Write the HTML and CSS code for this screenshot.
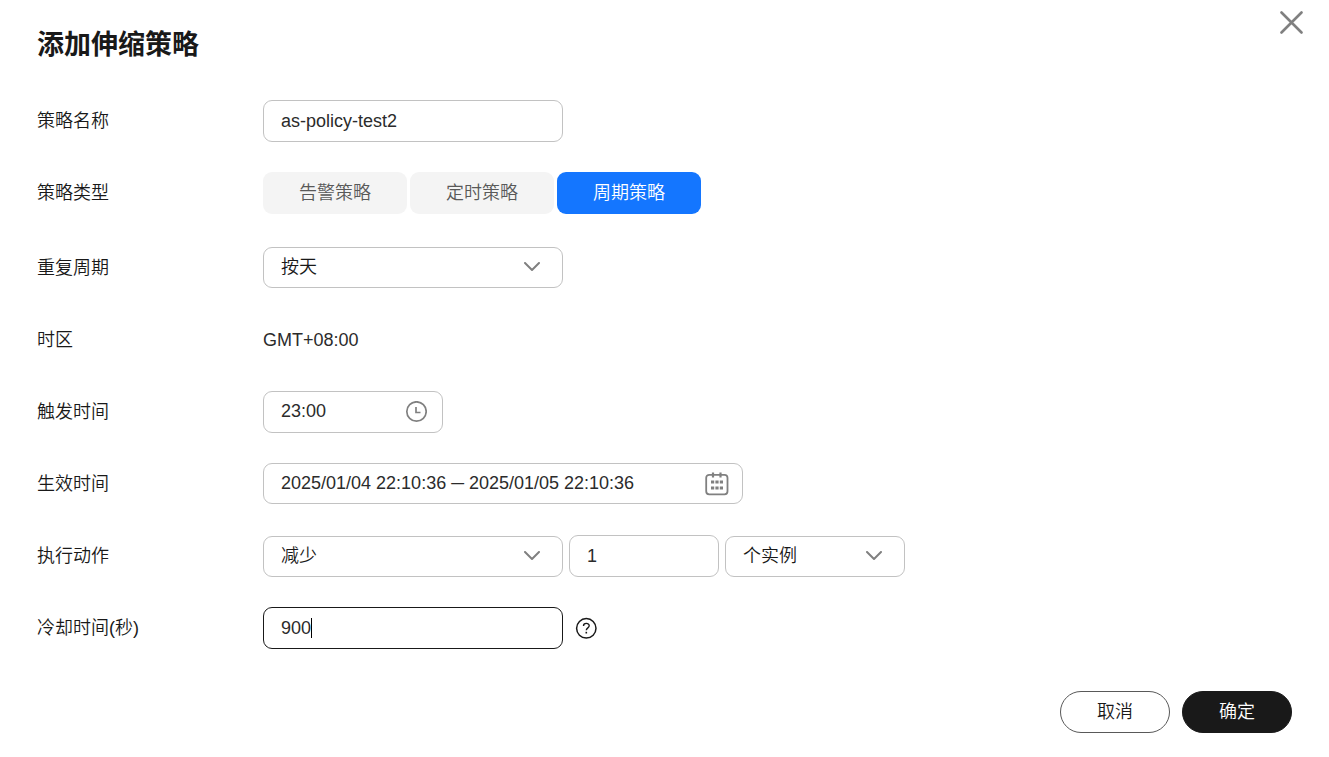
FILE: index.html
```html
<!DOCTYPE html>
<html lang="zh-CN">
<head>
<meta charset="utf-8">
<meta name="viewport" content="width=device-width, initial-scale=1">
<title>添加伸缩策略</title>
<link rel="stylesheet" href="styles.css">
</head>
<body>
<main class="dialog" role="dialog" aria-labelledby="dialog-title">
  <header class="dialog-header">
    <h1 class="dialog-title" id="dialog-title">添加伸缩策略</h1>
    <button class="close" type="button" aria-label="关闭">
      <svg width="24" height="24" viewBox="0 0 24 24" fill="none" stroke="currentColor" stroke-width="2.6" stroke-linecap="round"><path d="M2.500 2.500 22.500 22.500M22.500 2.500 2.500 22.500"/></svg>
    </button>
  </header>

  <form class="form">
    <div class="row">
      <label class="label" for="name">策略名称</label>
      <div class="controls"><input class="field input w-large" id="name" type="text" value="as-policy-test2"></div>
    </div>

    <div class="row row-tabs">
      <span class="label" id="type-label">策略类型</span>
      <div class="controls tabs" role="group" aria-labelledby="type-label">
        <button class="tab" type="button">告警策略</button>
        <button class="tab" type="button">定时策略</button>
        <button class="tab tab-active" type="button" aria-pressed="true">周期策略</button>
      </div>
    </div>

    <div class="row">
      <label class="label" for="period">重复周期</label>
      <div class="controls">
        <div class="picker w-large">
          <select class="field select" id="period"><option>按天</option></select>
          <svg class="chevron" width="16" height="10" viewBox="0 0 16 10"><path d="M1 1 8 8 15 1"/></svg>
        </div>
      </div>
    </div>

    <div class="row">
      <span class="label">时区</span>
      <div class="controls"><span class="value">GMT+08:00</span></div>
    </div>

    <div class="row">
      <label class="label" for="trigger">触发时间</label>
      <div class="controls">
        <div class="field time w-small">
          <input class="bare" id="trigger" type="text" value="23:00">
          <svg width="22" height="22" viewBox="0 0 22 22" fill="none" stroke="#808080" stroke-width="1.7"><circle cx="11.500" cy="10.500" r="9.700"/><path d="M11 6v5.500h4.500"/></svg>
        </div>
      </div>
    </div>

    <div class="row">
      <label class="label" for="effective">生效时间</label>
      <div class="controls">
        <div class="field range">
          <input class="bare" id="effective" type="text" value="2025/01/04 22:10:36 ─ 2025/01/05 22:10:36">
          <svg width="24" height="24" viewBox="0 0 24 24" fill="none" stroke="#808080" stroke-width="1.8"><rect x="1.200" y="2.800" width="21.300" height="19.500" rx="3"/><path d="M8 .5v5M15.500 .5v5" stroke-width="2.200"/><path d="M6 10h3.200M10.400 10h3.200M14.800 10h3.200M6 16h3.200M10.400 16h3.200M14.800 16h3.200" stroke-width="3.200"/></svg>
        </div>
      </div>
    </div>

    <div class="row row-action">
      <label class="label" for="action">执行动作</label>
      <div class="controls">
        <div class="picker w-large">
          <select class="field select" id="action"><option>减少</option></select>
          <svg class="chevron" width="16" height="10" viewBox="0 0 16 10"><path d="M1 1 8 8 15 1"/></svg>
        </div>
        <input class="field input w-count" type="text" value="1" aria-label="数量">
        <div class="picker w-small">
          <select class="field select" aria-label="单位"><option>个实例</option></select>
          <svg class="chevron" width="16" height="10" viewBox="0 0 16 10"><path d="M1 1 8 8 15 1"/></svg>
        </div>
      </div>
    </div>

    <div class="row row-cooldown">
      <label class="label" for="cooldown">冷却时间(秒)</label>
      <div class="controls">
        <div class="field editing w-large">
          <input class="bare" id="cooldown" type="text" value="900"><span class="caret"></span>
        </div>
        <button class="help" type="button" aria-label="帮助">
          <svg width="22" height="22" viewBox="0 0 22 22" fill="none" stroke="currentColor" stroke-width="1.5"><circle cx="11.300" cy="11.300" r="9.700"/><path d="M8.500 9C8.500 5.600 14.200 5.600 14.200 8.800c0 2.100-2.900 2-2.900 4.500" stroke-width="1.400"/><path d="M11.300 14.800v1.700" stroke-width="1.600"/></svg>
        </button>
      </div>
    </div>

    <footer class="footer">
      <button class="btn btn-cancel" type="button">取消</button>
      <button class="btn btn-ok" type="submit">确定</button>
    </footer>
  </form>
</main>
</body>
</html>
```
FILE: styles.css
```css
* { box-sizing: border-box; }
body {
  margin: 0;
  background: #fff;
  color: #191919;
  font: 350 18px/26px "Liberation Sans", "Noto Sans CJK SC", sans-serif;
}
button, input, select { font: inherit; color: inherit; margin: 0; }
button { padding: 0; border: 0; background: none; cursor: pointer; }
svg { display: block; flex: none; }

.dialog { padding: 10px 37px 24px; }
.dialog-header { display: flex; justify-content: space-between; align-items: flex-start; }
.dialog-title { margin: 15px 0 0; font-size: 27px; line-height: 40px; font-weight: 700; }
.close { margin-right: -11px; color: #808080; }

.form { padding-top: 35px; }
.row {
  display: grid;
  grid-template-columns: 226px 1fr;
  min-height: 42px;
  margin-bottom: 30px;
}
.row-tabs { margin-bottom: 33px; }
.row-cooldown { margin-bottom: 42px; }
.label, .value { line-height: 42px; }
.value, .input, .bare { color: #2b2b2b; }
.controls { display: flex; align-items: flex-start; gap: 6px; }
.row-action .controls { align-items: flex-end; }
.row-cooldown .controls { align-items: center; gap: 12px; }

.field {
  height: 42px;
  border: 1px solid #c2c2c2;
  border-radius: 9px;
  background: #fff;
  outline: 0;
}
.input { padding: 0 17px; }
.input:focus { border-color: #191919; }
.w-large { width: 300px; }
.w-small { width: 180px; }
.w-count { width: 150px; }

.picker { display: grid; align-items: center; }
.picker > * { grid-area: 1 / 1; }
.select { appearance: none; width: 100%; height: 41px; padding: 0 48px 2px 17px; }
.chevron {
  justify-self: end;
  margin-right: 23px;
  margin-bottom: 2px;
  fill: none;
  stroke: #808080;
  stroke-width: 2;
  stroke-linecap: round;
  stroke-linejoin: round;
  pointer-events: none;
}

.time, .range { display: flex; align-items: center; padding: 0 15px 0 17px; }
.range { width: 480px; height: 41px; padding-right: 13px; }
.bare { flex: 1; min-width: 0; padding: 0 0 2px; border: 0; outline: 0; background: none; }

.editing { display: flex; align-items: center; padding: 0 17px; border-color: #191919; }
.editing .bare { flex: none; width: 30px; padding: 0; field-sizing: content; caret-color: transparent; }
.caret { width: 1px; height: 20px; background: #000; }

.tabs { gap: 3px; }
.tab { width: 144px; height: 42px; border-radius: 9px; background: #f4f4f4; color: #595959; }
.tab-active { background: #1476ff; color: #fff; }
.help { color: #191919; }

.footer { display: flex; justify-content: flex-end; gap: 12px; }
.btn { width: 110px; height: 42px; border: 1px solid #595959; border-radius: 21px; }
.btn-ok { border-color: #191919; background: #191919; color: #fff; }
```
